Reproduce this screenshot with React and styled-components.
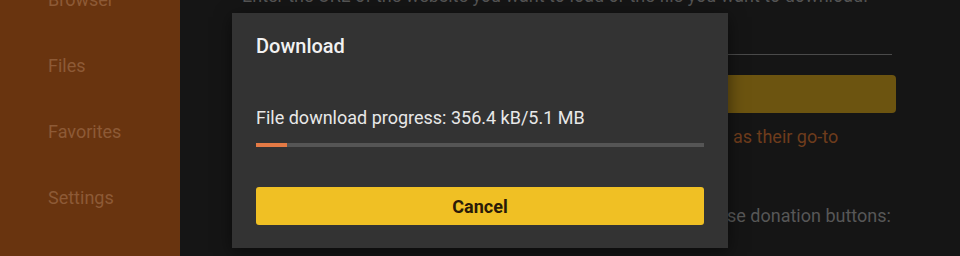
import React from "react";
import styled, { createGlobalStyle } from "styled-components";

const Global = createGlobalStyle`
  html, body { margin: 0; padding: 0; background: #151515; overflow: hidden; }
  body { font-family: Roboto, "Noto Sans", "Liberation Sans", sans-serif; }
`;

const Screen = styled.div`
  display: flex;
  width: 960px;
  height: 256px;
  overflow: hidden;
`;

const Sidebar = styled.nav`
  width: 180px;
  flex: none;
  background: #69340f;
  display: flex;
  flex-direction: column;
  padding-left: 48px;
  box-sizing: border-box;
`;

const NavList = styled.div`
  display: flex;
  flex-direction: column;
  margin-top: -34px;
`;

const NavItem = styled.div`
  height: 66px;
  display: flex;
  align-items: center;
  font-size: 18px;
  color: #8d5a36;
`;

const Main = styled.main`
  flex: 1;
  position: relative;
  background: #151515;
  overflow: hidden;
`;

const Content = styled.div`
  display: flex;
  flex-direction: column;
  padding-left: 62px;
  margin-top: -16px;
`;

const Hint = styled.div`
  font-size: 18px;
  line-height: 24px;
  color: #545454;
  white-space: nowrap;
`;

const UrlField = styled.div`
  margin-top: 46px;
  width: 650px;
  height: 1px;
  background: #4a4a4a;
`;

const GoButton = styled.div`
  margin-top: 20px;
  width: 654px;
  height: 38px;
  border-radius: 4px;
  background: #6c5410;
`;

const Para = styled.div`
  margin-top: ${(p) => p.$gap}px;
  font-size: 18px;
  line-height: 24px;
  white-space: nowrap;
  color: ${(p) => p.$color};
  padding-left: ${(p) => p.$indent}px;
`;

const Dialog = styled.div`
  position: absolute;
  left: 52px;
  top: 13px;
  width: 496px;
  height: 235px;
  background: #333333;
  box-sizing: border-box;
  padding: 21px 24px 0;
  display: flex;
  flex-direction: column;
  box-shadow: 0 4px 16px rgba(0, 0, 0, 0.5);
`;

const Title = styled.h2`
  margin: 0;
  font-size: 20px;
  line-height: 24px;
  font-weight: 500;
  color: #f2f2f2;
`;

const Message = styled.p`
  margin: 48px 0 0;
  font-size: 18px;
  line-height: 24px;
  color: #e8e8e8;
`;

const Track = styled.div`
  margin-top: 13px;
  height: 4px;
  background: #555555;
  position: relative;
  overflow: hidden;
`;

const Fill = styled.div`
  height: 100%;
  background: #e47a45;
`;

const Button = styled.button`
  margin-top: 40px;
  height: 38px;
  border: none;
  border-radius: 3px;
  background: #f0c024;
  color: #2a1a08;
  font-family: Roboto, "Noto Sans", "Liberation Sans", sans-serif;
  font-size: 18px;
  font-weight: 700;
  cursor: pointer;
`;

export default function App() {
  const progress = 356.4 / 5100;
  return (
    <>
      <Global />
      <Screen>
        <Sidebar>
          <NavList>
            <NavItem>Browser</NavItem>
            <NavItem>Files</NavItem>
            <NavItem>Favorites</NavItem>
            <NavItem>Settings</NavItem>
          </NavList>
        </Sidebar>
        <Main>
          <Content>
            <Hint>Enter the URL of the website you want to load or the file you want to download.</Hint>
            <UrlField />
            <GoButton />
            <Para $gap={12} $color="#6e3c1c" $indent={491}>as their go-to</Para>
            <Para $gap={55} $color="#575757" $indent={485}>se donation buttons:</Para>
          </Content>
          <Dialog>
            <Title>Download</Title>
            <Message>File download progress: 356.4 kB/5.1 MB</Message>
            <Track>
              <Fill style={{ width: `${progress * 100}%` }} />
            </Track>
            <Button>Cancel</Button>
          </Dialog>
        </Main>
      </Screen>
    </>
  );
}
